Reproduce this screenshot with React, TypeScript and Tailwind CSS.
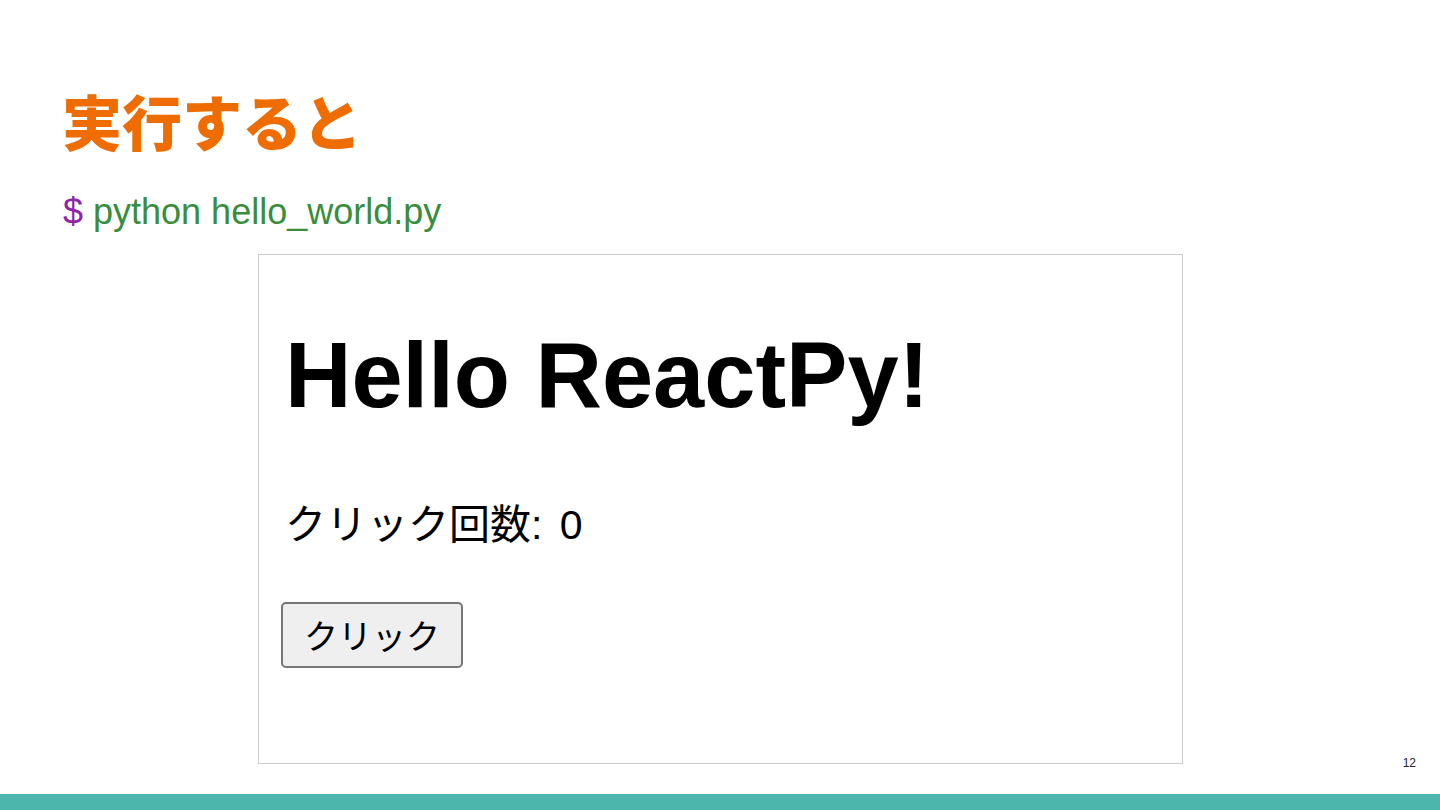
export default function App() {
  return (
    <div className="w-[1440px] h-[810px] bg-white flex flex-col overflow-hidden" style={{ fontFamily: '"Liberation Sans", Arial, "Noto Sans CJK JP", sans-serif' }}>
      <div className="flex-1 flex flex-col">
        <h1 className="pl-[62px] pt-[90px] text-[60px] leading-none font-black text-[#ef6c00]" style={{ fontFamily: '"Noto Sans CJK JP", sans-serif' }}>
          実行すると
        </h1>
        <div className="pl-[63px] mt-[44px] text-[36px] leading-none text-[#388e3c]">
          <span className="text-[#8e24aa]">$</span> python hello_world.py
        </div>
        <div className="flex mt-[24px]">
          <div className="ml-[258px] w-[925px] h-[510px] border border-[#cccccc] pl-[26px] pt-[74px]">
            <div className="text-[92px] leading-none font-bold text-black">Hello ReactPy!</div>
            <div className="mt-[80px] text-[41px] leading-none text-black" style={{ fontFamily: '"Noto Sans CJK JP", sans-serif' }}>
              クリック回数<span className="tracking-[3px]" style={{ fontFamily: '"Liberation Sans", Arial, sans-serif' }}>: 0</span>
            </div>
            <button className="mt-[56px] -ml-[4px] w-[182px] h-[66px] bg-[#efefef] border-2 border-[#767676] rounded-[5px] text-[34px] leading-none text-black" style={{ fontFamily: '"Noto Sans CJK JP", sans-serif' }}>
              クリック
            </button>
          </div>
          <div className="ml-auto mr-[24px] self-end mb-[-8px] text-[12px] text-[#222]">12</div>
        </div>
      </div>
      <div className="h-[16px] bg-[#4db6ac]" />
    </div>
  );
}
